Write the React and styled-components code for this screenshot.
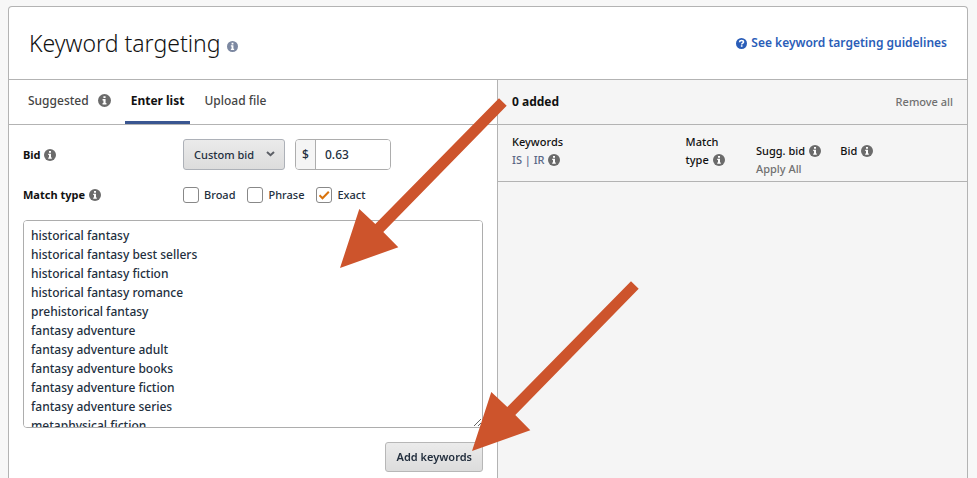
import React, { useState } from 'react';
import styled, { createGlobalStyle } from 'styled-components';

const defaultKeywords = [
   'historical fantasy',
   'historical fantasy best sellers',
   'historical fantasy fiction',
   'historical fantasy romance',
   'prehistorical fantasy',
   'fantasy adventure',
   'fantasy adventure adult',
   'fantasy adventure books',
   'fantasy adventure fiction',
   'fantasy adventure series',
   'metaphysical fiction',
].join('\n')

const InfoIcon = ({ size = 12, color = '#6b6b6b' }) => (
   <Icon width={size} height={size} viewBox="0 0 12 12" aria-hidden="true">
      <circle cx="6" cy="6" r="6" fill={color} />
      <path d="M5 2h2v1.7H5zM4.2 4.7H7v3.7h.8v1.3H4.2V8.4H5V6h-.8z" fill="#fff" />
   </Icon>
)

const HelpIcon = () => (
   <Icon width="11" height="11" viewBox="0 0 12 12" aria-hidden="true">
      <circle cx="6" cy="6" r="6" fill="#2a5db8" />
      <path d="M3.800 4.700C3.900 3.400 4.800 2.800 6 2.800s2.200.6 2.200 1.600C8.200 5.600 6.200 5.600 6.200 7" fill="none" stroke="#fff" strokeWidth="1.7" />
      <path d="M5.300 7.900h1.800v1.600H5.300z" fill="#fff" />
   </Icon>
)

const ArrowDrawing = () => (
   <svg width="167" height="170" viewBox="0 0 167 170" aria-hidden="true">
      <path d="M0 170 19.300 111 35.300 126 159 0.300 166.700 7.700 43.300 134 58.300 149.300z" fill="#cd542c" />
   </svg>
)

const App = () => {
   const [tab, setTab] = useState('enter')
   const [bid, setBid] = useState('0.63')
   const [keywords, setKeywords] = useState(defaultKeywords)
   const [match, setMatch] = useState({ Broad: false, Phrase: false, Exact: true })

   const toggleMatch = (name) => {
      setMatch({ ...match, [name]: !match[name] })
   }

   return (
      <Page>
         <GlobalStyle />
         <Card>
            <Header>
               <Title>Keyword targeting<InfoIcon size={11} color="#7c88a1" /></Title>
               <GuideLink href="#guidelines"><HelpIcon />See keyword targeting guidelines</GuideLink>
            </Header>
            <Columns>
               <Left>
                  <Tabs>
                     <Tab type="button" $active={tab === 'suggested'} onClick={() => setTab('suggested')}>
                        Suggested <InfoIcon size={13} />
                     </Tab>
                     <Tab type="button" $active={tab === 'enter'} onClick={() => setTab('enter')}>Enter list</Tab>
                     <Tab type="button" $active={tab === 'upload'} onClick={() => setTab('upload')}>Upload file</Tab>
                  </Tabs>
                  <Form onSubmit={e => e.preventDefault()}>
                     <BidRow>
                        <RowLabel htmlFor="bid">Bid <InfoIcon /></RowLabel>
                        <SelectBox>
                           <BidSelect aria-label="Bid type" defaultValue="custom">
                              <option value="custom">Custom bid</option>
                           </BidSelect>
                           <svg width="9" height="6" viewBox="0 0 9 6" aria-hidden="true">
                              <path d="M1 1l3.500 3.200L8 1" fill="none" stroke="#5c5f66" strokeWidth="2" />
                           </svg>
                        </SelectBox>
                        <Money>
                           <span>$</span>
                           <input id="bid" value={bid} onChange={e => setBid(e.target.value)} />
                        </Money>
                     </BidRow>
                     <MatchRow>
                        <RowLabel as="span">Match type <InfoIcon /></RowLabel>
                        {Object.keys(match).map(name => (
                           <Check key={name}>
                              <input type="checkbox" checked={match[name]} onChange={() => toggleMatch(name)} />
                              {match[name] && (
                                 <svg width="16" height="16" viewBox="0 0 16 16" aria-hidden="true">
                                    <path d="M3.500 8.300l3 3L12.800 4.800" fill="none" stroke="#d9730d" strokeWidth="2" />
                                 </svg>
                              )}
                              {name}
                           </Check>
                        ))}
                     </MatchRow>
                     <KeywordBox
                        aria-label="Keywords"
                        value={keywords}
                        spellCheck="false"
                        onChange={e => setKeywords(e.target.value)}
                     />
                     <AddButton type="submit">Add keywords</AddButton>
                  </Form>
                  <ListArrow><ArrowDrawing /></ListArrow>
                  <ButtonArrow><ArrowDrawing /></ButtonArrow>
               </Left>
               <Right>
                  <AddedBar>
                     <h2>0 added</h2>
                     <button type="button">Remove all</button>
                  </AddedBar>
                  <AddedTable>
                     <thead>
                        <tr>
                           <Th $width="40%">Keywords<br /><Muted>IS | IR</Muted> <InfoIcon /></Th>
                           <Th $width="15%">Match<br />type <InfoIcon /></Th>
                           <Th $width="18%" $drop>Sugg. bid <InfoIcon /><br /><ApplyAll type="button">Apply All</ApplyAll></Th>
                           <Th>Bid <InfoIcon /></Th>
                        </tr>
                     </thead>
                  </AddedTable>
               </Right>
            </Columns>
         </Card>
      </Page>
   );
}

export default App;

const GlobalStyle = createGlobalStyle`
   *{
      box-sizing: border-box;
   }

   body{
      margin: 0;
      background-color: #f7f7f7;
      color: #111;
      font-family: "Noto Sans", "Open Sans", sans-serif;
      font-size: 12px;
      line-height: 18px;
   }

   button, input, select, textarea{
      font: inherit;
      color: inherit;
   }
`

const Icon = styled.svg`
   flex: none;
   vertical-align: -2px;
`

const Page = styled.main`
   min-height: 100vh;
   padding: 6px 9px 0 8px;
   display: flex;
`

const Card = styled.section`
   flex: 1;
   display: flex;
   flex-direction: column;
   background-color: #fff;
   border: 1px solid #b3b3b3;
   border-bottom: none;
   border-radius: 4px 4px 0 0;
   overflow: hidden;
`

const Header = styled.header`
   display: flex;
   align-items: center;
   justify-content: space-between;
   height: 73px;
   padding: 0 20px;
   border-bottom: 1px solid #b3b3b3;
`

const Title = styled.h1`
   margin: 0;
   font-size: 23px;
   font-weight: 300;
   line-height: 32px;

   svg{
      margin-left: 6px;
      vertical-align: 0;
   }
`

const GuideLink = styled.a`
   display: flex;
   align-items: center;
   gap: 4px;
   color: #2a5db8;
   font-weight: 600;
   text-decoration: none;
`

const Columns = styled.div`
   flex: 1;
   display: grid;
   grid-template-columns: 488fr 470fr;
`

const Left = styled.div`
   position: relative;
   min-width: 0;
`

const Tabs = styled.nav`
   display: flex;
   height: 45px;
   gap: 8px;
   padding: 0 13px;
   border-bottom: 1px solid #b3b3b3;
`

const Tab = styled.button`
   display: flex;
   align-items: center;
   gap: 9px;
   padding: 0 6px;
   border: none;
   border-bottom: 3px solid ${p => p.$active ? '#3a5691' : 'transparent'};
   background: none;
   color: ${p => p.$active ? '#111' : '#444'};
   font-weight: ${p => p.$active ? 700 : 500};
   cursor: pointer;
`

const Form = styled.form`
   display: flex;
   flex-direction: column;
   padding: 14px 14px 6px;
`

const BidRow = styled.div`
   display: flex;
   align-items: center;
`

const MatchRow = styled.div`
   display: flex;
   align-items: center;
   gap: 12px;
   margin: 15px 0;
   height: 20px;

   > span{
      margin-right: -12px;
   }
`

const RowLabel = styled.label`
   width: 160px;
   font-size: 11px;
   font-weight: 700;

   svg{
      margin-left: 1px;
   }
`

const SelectBox = styled.div`
   position: relative;
   margin-right: 10px;

   svg{
      position: absolute;
      right: 10px;
      top: 12px;
      pointer-events: none;
   }
`

const BidSelect = styled.select`
   appearance: none;
   width: 102px;
   height: 31px;
   padding: 0 10px;
   border: 1px solid #adb1b8;
   border-radius: 3px;
   background: linear-gradient(#ebebeb, #dcdcdc);
   color: #232f3e;
   font-size: 11px;
   font-weight: 500;
`

const Money = styled.div`
   display: flex;
   width: 96px;
   height: 31px;
   border: 1px solid #adadad;
   border-radius: 4px;
   overflow: hidden;
   color: #232f3e;
   font-weight: 500;

   span{
      width: 20px;
      line-height: 29px;
      text-align: center;
      background-color: #f5f5f5;
      border-right: 1px solid #adadad;
   }

   input{
      flex: 1;
      min-width: 0;
      padding: 0 9px;
      border: none;
      outline: none;
   }
`

const Check = styled.label`
   position: relative;
   display: flex;
   align-items: center;
   gap: 5px;
   font-size: 11px;
   font-weight: 500;
   color: #232f3e;

   input{
      appearance: none;
      width: 16px;
      height: 16px;
      margin: 0;
      border: 1px solid #888;
      border-radius: 3px;
      background-color: #fff;
   }

   svg{
      position: absolute;
      left: 0;
   }
`

const KeywordBox = styled.textarea`
   width: 100%;
   height: 208px;
   padding: 5px 7px;
   border: 1px solid #adadad;
   border-radius: 4px;
   outline: none;
   color: #232f3e;
   font-weight: 500;
   line-height: 19px;
   scrollbar-width: none;
`

const AddButton = styled.button`
   align-self: flex-end;
   height: 30px;
   margin-top: 14px;
   padding: 0 10px;
   border: 1px solid #b7b7b7;
   border-radius: 3px;
   background: linear-gradient(#ebebeb, #dcdcdc);
   color: #232f3e;
   font-size: 11px;
   font-weight: 600;
   cursor: pointer;
`

/* callout arrows drawn over the form */
const Arrow = styled.div`
   position: absolute;
   z-index: 2;
   pointer-events: none;

   svg{
      display: block;
   }
`

const ListArrow = styled(Arrow)`
   top: 18px;
   right: -10px;
`

const ButtonArrow = styled(Arrow)`
   top: 201px;
   right: -142px;
`

const Right = styled.div`
   min-width: 0;
   background-color: #f5f5f5;
   border-left: 1px solid #b3b3b3;
`

const AddedBar = styled.div`
   display: flex;
   align-items: center;
   justify-content: space-between;
   height: 45px;
   padding: 0 14px;
   border-bottom: 1px solid #b3b3b3;

   h2{
      margin: 0;
      font-size: 12px;
      font-weight: 700;
   }

   button{
      padding: 0;
      border: none;
      background: none;
      color: #707070;
      font-size: 11px;
      font-weight: 500;
   }
`

const AddedTable = styled.table`
   width: 100%;
   height: 57px;
   table-layout: fixed;
   border-collapse: collapse;
   border-bottom: 1px solid #b3b3b3;
`

const Th = styled.th`
   width: ${p => p.$width || 'auto'};
   padding: ${p => p.$drop ? '14px 0 0' : '0 0 4px'};
   text-align: left;
   font-size: 11px;
   font-weight: 500;
   white-space: nowrap;

   &:first-child{
      padding-left: 14px;
   }

   svg{
      margin-left: 1px;
   }
`

const Muted = styled.span`
   color: #5a6785;
`

const ApplyAll = styled.button`
   padding: 0;
   border: none;
   background: none;
   color: #707070;
`
